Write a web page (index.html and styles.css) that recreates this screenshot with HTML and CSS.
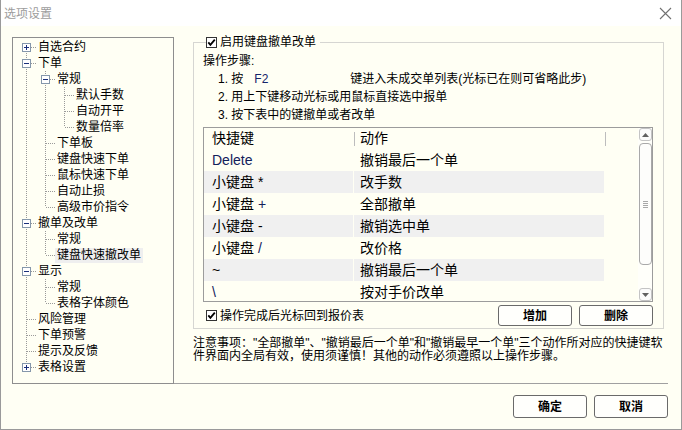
FILE: index.html
```html
<!DOCTYPE html>
<html lang="zh-CN">
<head>
<meta charset="utf-8">
<title>选项设置</title>
<link rel="stylesheet" href="styles.css">
</head>
<body>
<div class="window">
  <div class="titlebar">
    <span class="title">选项设置</span>
    <svg class="close" width="13" height="13" viewBox="0 0 13 13"><path d="M1 1L12 12M12 1L1 12" stroke="#707070" stroke-width="1.1" fill="none"/></svg>
  </div>
  <div class="main">
    <div class="tree">
      <div class="row"><span class="g f"><svg class="box" width="9" height="9" viewBox="0 0 9 9"><rect x="0.5" y="0.5" width="8" height="8" fill="#fff" stroke="#8597ab"/><path d="M2 4.5H7M4.5 2V7" stroke="#1a2f7a"/></svg></span><span class="lbl">自选合约</span></div>
      <div class="row"><span class="g t"><svg class="box" width="9" height="9" viewBox="0 0 9 9"><rect x="0.5" y="0.5" width="8" height="8" fill="#fff" stroke="#8597ab"/><path d="M2 4.5H7" stroke="#1a2f7a"/></svg></span><span class="lbl">下单</span></div>
      <div class="row"><span class="g i"></span><span class="g t"><svg class="box" width="9" height="9" viewBox="0 0 9 9"><rect x="0.5" y="0.5" width="8" height="8" fill="#fff" stroke="#8597ab"/><path d="M2 4.5H7" stroke="#1a2f7a"/></svg></span><span class="lbl">常规</span></div>
      <div class="row"><span class="g i"></span><span class="g i"></span><span class="g t"></span><span class="lbl">默认手数</span></div>
      <div class="row"><span class="g i"></span><span class="g i"></span><span class="g t"></span><span class="lbl">自动开平</span></div>
      <div class="row"><span class="g i"></span><span class="g i"></span><span class="g l"></span><span class="lbl">数量倍率</span></div>
      <div class="row"><span class="g i"></span><span class="g t"></span><span class="lbl">下单板</span></div>
      <div class="row"><span class="g i"></span><span class="g t"></span><span class="lbl">键盘快速下单</span></div>
      <div class="row"><span class="g i"></span><span class="g t"></span><span class="lbl">鼠标快速下单</span></div>
      <div class="row"><span class="g i"></span><span class="g t"></span><span class="lbl">自动止损</span></div>
      <div class="row"><span class="g i"></span><span class="g l"></span><span class="lbl">高级市价指令</span></div>
      <div class="row"><span class="g t"><svg class="box" width="9" height="9" viewBox="0 0 9 9"><rect x="0.5" y="0.5" width="8" height="8" fill="#fff" stroke="#8597ab"/><path d="M2 4.5H7" stroke="#1a2f7a"/></svg></span><span class="lbl">撤单及改单</span></div>
      <div class="row"><span class="g i"></span><span class="g t"></span><span class="lbl">常规</span></div>
      <div class="row"><span class="g i"></span><span class="g l"></span><span class="lbl sel">键盘快速撤改单</span></div>
      <div class="row"><span class="g t"><svg class="box" width="9" height="9" viewBox="0 0 9 9"><rect x="0.5" y="0.5" width="8" height="8" fill="#fff" stroke="#8597ab"/><path d="M2 4.5H7" stroke="#1a2f7a"/></svg></span><span class="lbl">显示</span></div>
      <div class="row"><span class="g i"></span><span class="g t"></span><span class="lbl">常规</span></div>
      <div class="row"><span class="g i"></span><span class="g l"></span><span class="lbl">表格字体颜色</span></div>
      <div class="row"><span class="g t"></span><span class="lbl">风险管理</span></div>
      <div class="row"><span class="g t"></span><span class="lbl">下单预警</span></div>
      <div class="row"><span class="g t"></span><span class="lbl">提示及反馈</span></div>
      <div class="row"><span class="g l"><svg class="box" width="9" height="9" viewBox="0 0 9 9"><rect x="0.5" y="0.5" width="8" height="8" fill="#fff" stroke="#8597ab"/><path d="M2 4.5H7M4.5 2V7" stroke="#1a2f7a"/></svg></span><span class="lbl">表格设置</span></div>
    </div>
    <div class="panel">
      <div class="group">
        <div class="group-title">
          <svg class="cb" width="11" height="11" viewBox="0 0 11 11"><rect x="0.5" y="0.5" width="10" height="10" fill="#fff" stroke="#333"/><path d="M2.3 5.3L4.4 7.8L8.8 2.6" stroke="#000" stroke-width="1.8" fill="none"/></svg>
          <span>启用键盘撤单改单</span>
        </div>
        <div class="steps">
          <div class="line">操作步骤:</div>
          <div class="line step">1. 按<span class="key">F2</span>键进入未成交单列表(光标已在则可省略此步)</div>
          <div class="line step">2. 用上下键移动光标或用鼠标直接选中报单</div>
          <div class="line step">3. 按下表中的键撤单或者改单</div>
        </div>
        <div class="list">
          <div class="table">
            <div class="hd c1">快捷键</div><div class="hd c2 dv">动作</div><div class="hd c3 dv"></div>
            <div class="cell c1 lat">Delete</div><div class="cell c2">撤销最后一个单</div><div class="cell c3"></div>
            <div class="cell c1 alt">小键盘 *</div><div class="cell c2 alt">改手数</div><div class="cell c3"></div>
            <div class="cell c1">小键盘 <span class="lat">+</span></div><div class="cell c2">全部撤单</div><div class="cell c3"></div>
            <div class="cell c1 alt">小键盘 -</div><div class="cell c2 alt">撤销选中单</div><div class="cell c3"></div>
            <div class="cell c1">小键盘 <span class="lat">/</span></div><div class="cell c2">改价格</div><div class="cell c3"></div>
            <div class="cell c1 alt">~</div><div class="cell c2 alt">撤销最后一个单</div><div class="cell c3"></div>
            <div class="cell c1 lat">\</div><div class="cell c2">按对手价改单</div><div class="cell c3"></div>
          </div>
          <div class="scrollbar">
            <div class="sb-btn"><svg width="7" height="4" viewBox="0 0 7 4"><path d="M0 4L3.5 0L7 4Z" fill="#606060"/></svg></div>
            <div class="thumb"><span class="grip"></span></div>
            <div class="sb-fill"></div>
            <div class="sb-btn"><svg width="7" height="4" viewBox="0 0 7 4"><path d="M0 0L3.5 4L7 0Z" fill="#606060"/></svg></div>
          </div>
        </div>
        <div class="actions">
          <label class="check">
            <svg class="cb" width="11" height="11" viewBox="0 0 11 11"><rect x="0.5" y="0.5" width="10" height="10" fill="#fff" stroke="#333"/><path d="M2.3 5.3L4.4 7.8L8.8 2.6" stroke="#000" stroke-width="1.8" fill="none"/></svg>
            <span>操作完成后光标回到报价表</span>
          </label>
          <div class="btns">
            <button class="btn small">增加</button>
            <button class="btn small">删除</button>
          </div>
        </div>
      </div>
      <p class="notes">注意事项："全部撤单"、"撤销最后一个单"和"撤销最早一个单"三个动作所对应的快捷键软<br>件界面内全局有效，使用须谨慎！其他的动作必须遵照以上操作步骤。</p>
    </div>
  </div>
  <div class="footer">
    <button class="btn big">确定</button>
    <button class="btn big">取消</button>
  </div>
</div>
</body>
</html>
```

FILE: styles.css
```css
html, body {
  margin: 0;
  padding: 0;
}
body {
  width: 682px;
  height: 430px;
  overflow: hidden;
  font-family: "Liberation Sans", "Noto Sans CJK SC", sans-serif;
  font-size: 12px;
  color: #000;
  background: #fffff4;
}
.window {
  box-sizing: border-box;
  width: 682px;
  height: 430px;
  border: 1px solid #9a9a9a;
  border-top: none;
  background: #fffff4;
  display: flex;
  flex-direction: column;
}
.titlebar {
  height: 26px;
  flex: none;
  background: #ffffff;
  display: flex;
  align-items: center;
  justify-content: space-between;
  padding: 0 9px 0 3px;
}
.title {
  color: #9c9c9c;
  font-size: 12px;
  line-height: 14px;
  margin-top: 1px;
}
.close {
  display: block;
}
.main {
  display: flex;
  padding: 11px 13px 0 11px;
}
.tree {
  box-sizing: border-box;
  width: 162px;
  height: 347px;
  flex: none;
  border: 1px solid #8e8e8e;
  padding: 1px 0 0 4px;
}
.row {
  display: flex;
  height: 16px;
  align-items: center;
}
.g {
  flex: none;
  width: 19px;
  height: 16px;
  display: flex;
  align-items: center;
  padding-left: 5px;
  box-sizing: border-box;
}
.g .box {
  display: block;
  margin-top: 0px;
}
.g.i {
  background: repeating-linear-gradient(to bottom, #9a9a9a 0 1px, transparent 1px 2px) 9px 0 / 1px 16px no-repeat;
}
.g.t {
  background:
    repeating-linear-gradient(to right, #9a9a9a 0 1px, transparent 1px 2px) 10px 8px / 9px 1px no-repeat,
    repeating-linear-gradient(to bottom, #9a9a9a 0 1px, transparent 1px 2px) 9px 0 / 1px 16px no-repeat;
}
.g.l {
  background:
    repeating-linear-gradient(to right, #9a9a9a 0 1px, transparent 1px 2px) 10px 8px / 9px 1px no-repeat,
    repeating-linear-gradient(to bottom, #9a9a9a 0 1px, transparent 1px 2px) 9px 0 / 1px 8px no-repeat;
}
.g.f {
  background:
    repeating-linear-gradient(to right, #9a9a9a 0 1px, transparent 1px 2px) 10px 8px / 9px 1px no-repeat,
    repeating-linear-gradient(to bottom, #9a9a9a 0 1px, transparent 1px 2px) 9px 8px / 1px 8px no-repeat;
}
.lbl {
  padding: 0 2px;
  line-height: 15px;
  height: 15px;
  white-space: nowrap;
  font-size: 12px;
}
.lbl.sel {
  background: #efefef;
}
.panel {
  box-sizing: border-box;
  width: 494px;
  flex: none;
  padding: 0 4px 0 19px;
  border-bottom: 1px solid #a0a0a0;
}
.group {
  box-sizing: border-box;
  width: 471px;
  margin-top: 5px;
  border: 1px solid #d6d6d2;
  padding: 0 10px 2px 9px;
}
.group-title {
  display: flex;
  align-items: center;
  gap: 3px;
  height: 12px;
  margin: -7px 0 0 3px;
  padding-right: 4px;
  width: fit-content;
  background: #fffff4;
  line-height: 12px;
}
.cb {
  display: block;
  flex: none;
}
.steps {
  margin-top: 4px;
}
.line {
  line-height: 18px;
  height: 18px;
  white-space: nowrap;
}
.step {
  padding-left: 15px;
}
.key {
  display: inline-block;
  box-sizing: border-box;
  width: 107px;
  padding-left: 11px;
  color: #14246a;
}
.list {
  box-sizing: border-box;
  width: 450px;
  height: 175px;
  margin-top: 3px;
  border: 1px solid #9c9c9c;
  display: flex;
  overflow: hidden;
}
.table {
  width: 434px;
  flex: none;
  display: grid;
  grid-template-columns: 149px 250px 1fr;
  grid-template-rows: 21px repeat(7, 22px);
  column-gap: 1px;
  overflow: hidden;
  font-size: 14px;
}
.hd {
  line-height: 21px;
  padding-left: 8px;
  white-space: nowrap;
}
.hd.dv {
  padding-left: 6px;
  background: linear-gradient(#bdbdbd, #bdbdbd) 0 4px / 1px 14px no-repeat;
}
.cell {
  line-height: 22px;
  white-space: nowrap;
}
.cell.c1 {
  padding-left: 8px;
}
.cell.c2 {
  padding-left: 6px;
}
.cell.alt {
  background: #f0f0f0;
}
.lat {
  color: #12205a;
}
.scrollbar {
  width: 14px;
  flex: none;
  display: flex;
  flex-direction: column;
  gap: 1px;
  background: #fffffa;
}
.sb-btn {
  box-sizing: border-box;
  height: 13px;
  margin: 0 0 0 1px;
  border: 1px solid #c4c4c4;
  border-radius: 3px;
  display: flex;
  align-items: center;
  justify-content: center;
  background: #fbfbfb;
}
.thumb {
  box-sizing: border-box;
  height: 122px;
  margin: 1px 0 0 1px;
  border: 1px solid #a9a9a9;
  border-radius: 4px;
  background: #fdfdfb;
  display: flex;
  align-items: center;
  justify-content: center;
}
.grip {
  display: block;
  width: 5px;
  height: 7px;
  background: repeating-linear-gradient(to bottom, #a8a8a8 0 1px, transparent 1px 2px);
}
.sb-fill {
  flex: 1;
}
.actions {
  display: flex;
  align-items: center;
  justify-content: space-between;
  margin-top: 3px;
  height: 21px;
  width: 450px;
}
.check {
  display: flex;
  align-items: center;
  gap: 3px;
  padding-left: 3px;
  line-height: 14px;
  white-space: nowrap;
}
.btns {
  display: flex;
  gap: 7px;
}
.btn {
  box-sizing: border-box;
  font-family: "Liberation Sans", "Noto Sans CJK SC", sans-serif;
  font-weight: bold;
  font-size: 12px;
  color: #000;
  background: #fffffc;
  border: 1px solid #6a6a6a;
  border-radius: 3px;
  padding: 0;
  margin: 0;
  line-height: 14px;
}
.btn.small {
  width: 74px;
  height: 21px;
}
.btn.big {
  width: 74px;
  height: 23px;
}
.notes {
  margin: 8px 0 0 0;
  line-height: 13px;
  font-size: 12px;
  white-space: nowrap;
}
.footer {
  display: flex;
  justify-content: flex-end;
  gap: 7px;
  padding: 11px 13px 0 0;
}
```
